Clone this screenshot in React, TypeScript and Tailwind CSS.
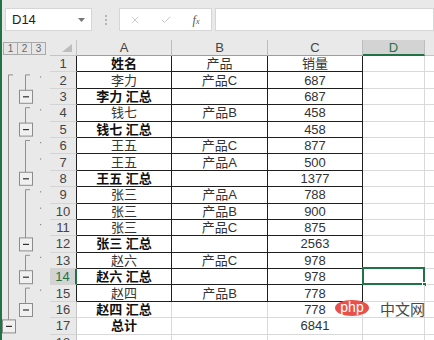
import React from "react";
import { X, Check } from "lucide-react";

type Row = { n: number; a?: string; b?: string; c?: string; bold?: boolean };

const rows: Row[] = [
  { n: 1, a: "姓名", b: "产品", c: "销量", bold: true },
  { n: 2, a: "李力", b: "产品C", c: "687" },
  { n: 3, a: "李力 汇总", b: "", c: "687", bold: true },
  { n: 4, a: "钱七", b: "产品B", c: "458" },
  { n: 5, a: "钱七 汇总", b: "", c: "458", bold: true },
  { n: 6, a: "王五", b: "产品C", c: "877" },
  { n: 7, a: "王五", b: "产品A", c: "500" },
  { n: 8, a: "王五 汇总", b: "", c: "1377", bold: true },
  { n: 9, a: "张三", b: "产品A", c: "788" },
  { n: 10, a: "张三", b: "产品B", c: "900" },
  { n: 11, a: "张三", b: "产品C", c: "875" },
  { n: 12, a: "张三 汇总", b: "", c: "2563", bold: true },
  { n: 13, a: "赵六", b: "产品C", c: "978" },
  { n: 14, a: "赵六 汇总", b: "", c: "978", bold: true },
  { n: 15, a: "赵四", b: "产品B", c: "778" },
  { n: 16, a: "赵四 汇总", b: "", c: "778", bold: true },
  { n: 17, a: "总计", b: "", c: "6841", bold: true },
  { n: 18 },
  { n: 19 },
];

const RH = 16.4;
const top = (r: number) => (r - 1) * RH;

function Outline() {
  const groups: [number, number][] = [
    [2, 3],
    [4, 5],
    [6, 8],
    [9, 12],
    [13, 14],
    [15, 16],
  ];
  const details = [2, 4, 6, 7, 9, 10, 11, 13, 15];
  const btn = (x: number, r: number, key: string) => {
    const y = top(r) + 1.5;
    return (
      <g key={key}>
        <rect x={x + 0.5} y={y} width={13} height={13} fill="#f0f0f0" stroke="#8c8c8c" strokeWidth={1} />
        <line x1={x + 4} x2={x + 10} y1={y + 6.5} y2={y + 6.5} stroke="#333" strokeWidth={1.2} />
      </g>
    );
  };
  return (
    <svg width={48} height={320} className="block">
      <path d={`M11 ${top(2) + 2.5} H6.5 V${top(17) + 1.5}`} fill="none" stroke="#8f8f8f" strokeWidth={1} />
      {btn(0, 17, "l1")}
      {groups.map(([f, s], i) => (
        <g key={i}>
          <path d={`M28 ${top(f) + 2.5} H23.5 V${top(s) + 1.5}`} fill="none" stroke="#8f8f8f" strokeWidth={1} />
          {btn(17, s, "b" + i)}
        </g>
      ))}
      {details.map((r) => (
        <rect key={r} x={38} y={top(r) + 4} width={1.2} height={1.2} fill="#8a8a8a" />
      ))}
    </svg>
  );
}

export default function App() {
  const cjk = "font-['Liberation_Sans','Noto_Sans_CJK_SC',sans-serif]";
  return (
    <div className={`w-[434px] h-[340px] overflow-hidden bg-[#e9e9e9] border-l-2 border-[#217346] relative ${cjk}`}>
      {/* formula bar */}
      <div className="h-[40px] flex items-start pt-[8px] pl-[3px]">
        <div className="w-[87px] h-[23px] bg-white border border-[#d6d6d6] flex items-center justify-between pl-[6px] pr-[6px]">
          <span className="text-[13px] text-[#222] leading-none">D14</span>
          <svg width="7" height="4" viewBox="0 0 7 4">
            <path d="M0 0 H7 L3.5 4 Z" fill="#777" />
          </svg>
        </div>
        <div className="w-[27px] h-[23px] flex flex-col items-center justify-center gap-[2px]">
          <div className="w-[2px] h-[2px] bg-[#b5b5b5]" />
          <div className="w-[2px] h-[2px] bg-[#b5b5b5]" />
          <div className="w-[2px] h-[2px] bg-[#b5b5b5]" />
        </div>
        <div className="w-[93px] h-[23px] bg-white border border-[#d6d6d6] flex items-center">
          <div className="w-[30px] flex justify-center">
            <X size={12} strokeWidth={1.4} color="#b8b8b8" />
          </div>
          <div className="w-[31px] flex justify-center">
            <Check size={12} strokeWidth={1.6} color="#b8b8b8" />
          </div>
          <div className="w-[30px] flex justify-center">
            <span className="font-['Liberation_Serif',serif] italic text-[12px] text-[#555] leading-none">
              f<span className="text-[8px]">x</span>
            </span>
          </div>
        </div>
        <div className="flex-1 ml-[3px] h-[23px] bg-white border border-[#d6d6d6]" />
      </div>

      {/* sheet */}
      <div className="flex">
        <div className="w-[48px] shrink-0">
          <div className="h-[16px] flex items-start pt-[2px] pl-[1px]">
            {["1", "2", "3"].map((t) => (
              <div
                key={t}
                className="w-[15px] h-[13px] border border-[#a9a9a9] -ml-px first:ml-0 bg-[#e6e6e6] flex items-center justify-center text-[10px] text-[#666] leading-none"
              >
                {t}
              </div>
            ))}
          </div>
          <Outline />
        </div>
        <div className="flex-1 flex flex-col">
          <div className="h-[16px] flex text-[13px] text-[#444] leading-none">
            <div className="w-[27px] shrink-0 border-r border-b border-[#c4c4c4] flex items-end justify-end pr-[4px] pb-[3px]">
              <svg width="10" height="8" viewBox="0 0 10 8">
                <path d="M10 0 V8 H0 Z" fill="#bdbdbd" />
              </svg>
            </div>
            {["A", "B", "C"].map((c, i) => (
              <div
                key={c}
                className={`${i === 1 ? "w-[96px]" : "w-[95px]"} shrink-0 border-r border-b border-r-[#bdbdbd] border-b-[#9e9e9e] flex items-center justify-center`}
              >
                {c}
              </div>
            ))}
            <div className="w-[62px] shrink-0 bg-[#d3d3d3] border-r border-[#bdbdbd] border-b-2 border-b-[#217346] flex items-center justify-center text-[#217346]">
              D
            </div>
            <div className="flex-1 border-b border-[#c4c4c4]" />
          </div>
          {rows.map((r) => {
            const dark = r.n <= 15;
            const sel = r.n === 14;
            const cellBorder = dark ? "border-[#1e1e1e]" : "border-[#d9d9d9]";
            const txt = r.bold ? "font-bold text-[#111]" : "text-[#333]";
            return (
              <div key={r.n} className="h-[16.4px] flex text-[13px] leading-none">
                <div
                  className={`w-[27px] shrink-0 border-b border-b-[#d4d4d4] flex items-center justify-center ${
                    sel
                      ? "bg-[#d3d3d3] text-[#217346] border-r-2 border-r-[#217346]"
                      : `text-[#444] border-r ${dark ? "border-r-[#1e1e1e]" : "border-r-[#c4c4c4]"}`
                  }`}
                >
                  {r.n}
                </div>
                <div className={`w-[95px] shrink-0 bg-white border-r border-b ${cellBorder} flex items-center justify-center ${txt}`}>
                  {r.a}
                </div>
                <div className={`w-[96px] shrink-0 bg-white border-r border-b ${cellBorder} flex items-center justify-center text-[#333]`}>
                  {r.b}
                </div>
                <div className={`w-[95px] shrink-0 bg-white border-r border-b ${cellBorder} flex items-center justify-center text-[#333]`}>
                  {r.c}
                </div>
                <div className="w-[62px] shrink-0 bg-white border-r border-b border-[#d9d9d9] relative">
                  {sel && (
                    <div className="absolute -top-[2px] -left-[1px] -right-[1px] -bottom-[1px] border-2 border-[#217346]">
                      <div className="absolute -right-[4px] -bottom-[4px] w-[5px] h-[5px] bg-[#217346] border border-white" />
                    </div>
                  )}
                </div>
                <div className="flex-1 bg-white border-b border-[#d9d9d9]" />
              </div>
            );
          })}
        </div>
      </div>

      {/* watermark */}
      <div className="absolute left-[333px] top-[300px] flex items-center gap-[11px]">
        <div className="w-[34px] h-[16px] rounded-[50%] bg-[#e9504a] flex items-center justify-center">
          <span className="text-white text-[14px] leading-none font-['Liberation_Sans',sans-serif] -mt-[3px]">php</span>
        </div>
        <span className="text-[15px] text-[#4a4a4a] leading-none font-['Noto_Sans_CJK_SC',sans-serif]">中文网</span>
      </div>
    </div>
  );
}
